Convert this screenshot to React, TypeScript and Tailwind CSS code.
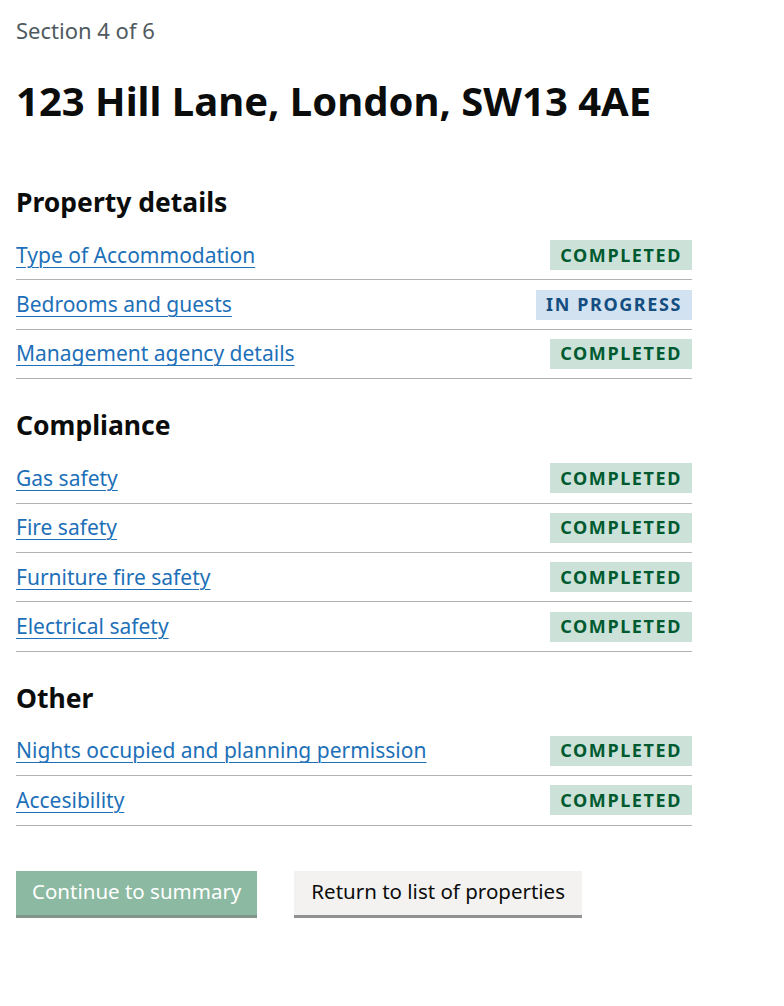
import React from "react";

type Item = { label: string; status: "completed" | "progress" };

const sections: { title: string; items: Item[] }[] = [
  {
    title: "Property details",
    items: [
      { label: "Type of Accommodation", status: "completed" },
      { label: "Bedrooms and guests", status: "progress" },
      { label: "Management agency details", status: "completed" },
    ],
  },
  {
    title: "Compliance",
    items: [
      { label: "Gas safety", status: "completed" },
      { label: "Fire safety", status: "completed" },
      { label: "Furniture fire safety", status: "completed" },
      { label: "Electrical safety", status: "completed" },
    ],
  },
  {
    title: "Other",
    items: [
      { label: "Nights occupied and planning permission", status: "completed" },
      { label: "Accesibility", status: "completed" },
    ],
  },
];

function Tag({ status }: { status: Item["status"] }) {
  if (status === "progress") {
    return (
      <span className="h-[30px] px-[10px] flex items-center bg-[#d2e2f1] text-[#144e81] font-bold uppercase tracking-[1.6px] text-[18px]">
        In progress
      </span>
    );
  }
  return (
    <span className="h-[30px] px-[10px] flex items-center bg-[#cce2d8] text-[#005a30] font-bold uppercase tracking-[1.6px] text-[18px]">
      Completed
    </span>
  );
}

export default function App() {
  return (
    <div className="min-h-[1006px] w-[784px] bg-white text-[#0b0c0c] px-4 pt-[17px] font-['Noto_Sans',sans-serif]">
      <div className="w-[676px]">
        <p className="text-[22px] leading-[26px] text-[#505a5f]">Section 4 of 6</p>
        <h1 className="mt-[34px] text-[40px] leading-[48px] font-bold">
          123 Hill Lane, London, SW13 4AE
        </h1>
        <div className="mt-[62px]">
          {sections.map((s, i) => (
            <section key={s.title} className={i === 0 ? "" : "mt-[31px]"}>
              <h2 className="text-[26.5px] leading-[30px] font-bold mb-[14px]">{s.title}</h2>
              <ul>
                {s.items.map((it) => (
                  <li
                    key={it.label}
                    className="h-[49.4px] border-b border-[#b1b4b6] flex items-center justify-between"
                  >
                    <a
                      href="#"
                      className="text-[21px] leading-[25px] text-[#1d70b8] underline decoration-1 underline-offset-[4px]"
                    >
                      {it.label}
                    </a>
                    <Tag status={it.status} />
                  </li>
                ))}
              </ul>
            </section>
          ))}
        </div>
        <div className="mt-[45px] flex items-start gap-[37px]">
          <button className="h-[44px] px-[16px] bg-[#8cb9a1] text-white text-[20.5px] shadow-[0_3px_0_#80968b] pb-[2px]">
            Continue to summary
          </button>
          <button className="h-[44px] px-[17px] bg-[#f3f2f1] text-[#0b0c0c] text-[20.5px] shadow-[0_3px_0_#929191] pb-[2px]">
            Return to list of properties
          </button>
        </div>
      </div>
    </div>
  );
}
